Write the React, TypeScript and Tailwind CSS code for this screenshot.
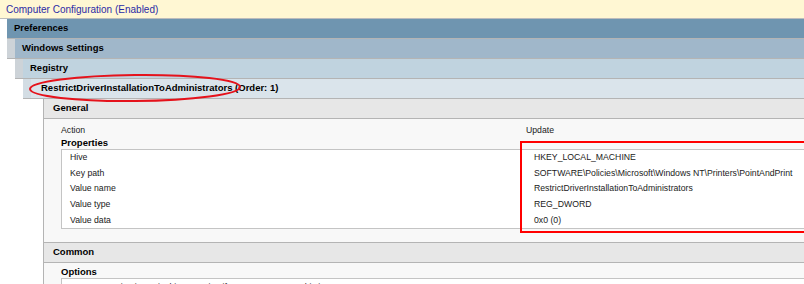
import React from 'react';

const FONT = "font-['Liberation_Sans',Arial,sans-serif]";

function Header({
  label,
  indent,
  stub,
  color,
}: {
  label: string;
  indent: string;
  stub: boolean;
  color: string;
}) {
  return (
    <div className={`flex h-[20px] ${indent}`}>
      {stub && <div className="w-[8px] shrink-0 bg-[#cdd3d8] border-b border-[#b4b4b4]" />}
      <div
        className={`flex-1 flex items-center pl-[7px] border-b border-[#b4b4b4] text-[9.5px] font-bold text-black ${color}`}
      >
        {label}
      </div>
    </div>
  );
}

function PropRow({ label, value }: { label: string; value: string }) {
  return (
    <div className="flex items-center h-[15.6px]">
      <span className="w-[472px] shrink-0 pl-[8px]">{label}</span>
      <span>{value}</span>
    </div>
  );
}

export default function App() {
  return (
    <div className={`relative w-[804px] h-[284px] overflow-hidden bg-white ${FONT} text-[8.7px] text-[#1a1a1a]`}>
      <div className="h-[19px] flex items-center pl-[6px] bg-[#fff7d3] border-b border-[#bcbcbc] text-[10px] text-[#2b2ba6]">
        Computer Configuration (Enabled)
      </div>

      <Header label="Preferences" indent="ml-[7px]" stub={false} color="bg-[#6f95b0]" />
      <Header label="Windows Settings" indent="ml-[7px]" stub color="bg-[#a0b7ca]" />
      <Header label="Registry" indent="ml-[15px]" stub color="bg-[#c0d3df]" />
      <div className="flex h-[20px] ml-[23px]">
        <div className="w-[8px] shrink-0 bg-[#d3dde4] border-b border-[#b4b4b4]" />
        <div className="flex-1 flex items-center pl-[10px] border-b border-[#b4b4b4] bg-[#dae4eb] text-[9.5px] font-bold text-black">
          RestrictDriverInstallationToAdministrators (Order: 1)
        </div>
      </div>

      <div className="ml-[43px] border-l border-[#b4b4b4]">
        <div className="h-[20px] flex items-center pl-[9px] bg-[#e7e7e7] border-b border-[#b4b4b4] text-[9.5px] font-bold text-black">
          General
        </div>
        <div className="bg-[#f8f8f8] pl-[17px] pt-[4px] pb-[13px] border-b border-[#b4b4b4]">
          <div className="flex items-center h-[15px]">
            <span className="w-[465px] shrink-0">Action</span>
            <span>Update</span>
          </div>
          <div className="h-[11px] flex items-center text-[9.5px] font-bold text-black">Properties</div>
          <div className="bg-white border-t border-b border-l border-[#c4c4c4]">
            <PropRow label="Hive" value="HKEY_LOCAL_MACHINE" />
            <PropRow label="Key path" value="SOFTWARE\Policies\Microsoft\Windows NT\Printers\PointAndPrint" />
            <PropRow label="Value name" value="RestrictDriverInstallationToAdministrators" />
            <PropRow label="Value type" value="REG_DWORD" />
            <PropRow label="Value data" value="0x0 (0)" />
          </div>
        </div>
        <div className="h-[20px] flex items-center pl-[9px] bg-[#e7e7e7] border-b border-[#b4b4b4] text-[9.5px] font-bold text-black">
          Common
        </div>
        <div className="bg-[#f8f8f8] pl-[17px] pt-[3px]">
          <div className="h-[12px] flex items-center text-[9.5px] font-bold text-black">Options</div>
          <div className="bg-white border-t border-l border-[#c4c4c4] pt-[1px]">
            <div className="flex items-center h-[15.6px]">
              <span className="w-[472px] shrink-0 pl-[8px]">
                Stop processing items in this extension if an error occurs on this item
              </span>
              <span>No</span>
            </div>
          </div>
        </div>
      </div>

      {/* annotations drawn over the report */}
      <svg className="absolute left-0 top-0 pointer-events-none" width="804" height="284">
        <ellipse
          cx="135"
          cy="88"
          rx="105"
          ry="13"
          fill="none"
          stroke="#e5121b"
          strokeWidth="2"
          transform="rotate(-0.6 135 88)"
        />
      </svg>
      <div className="absolute left-[520px] top-[141px] w-[300px] h-[92px] border-2 border-[#ff0000] pointer-events-none" />
    </div>
  );
}
